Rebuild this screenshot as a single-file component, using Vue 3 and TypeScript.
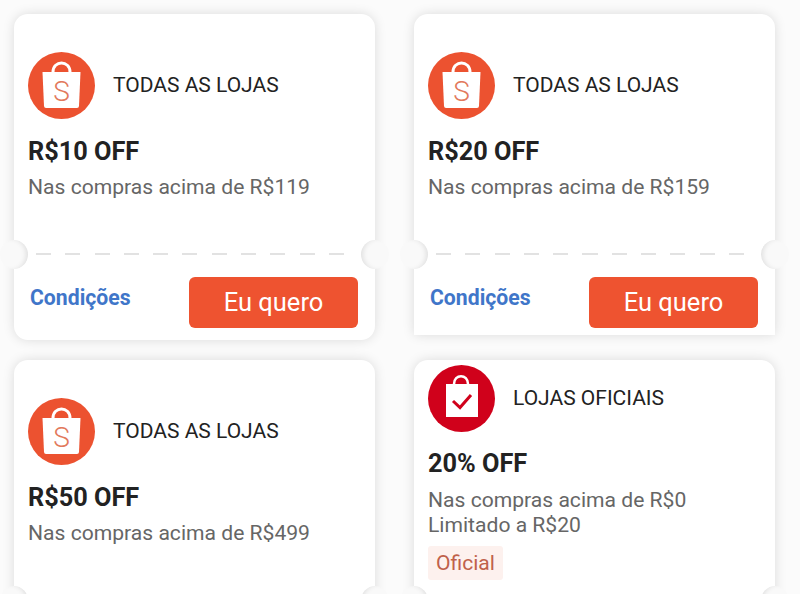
<script setup lang="ts">
type Coupon = {
  id: number
  kind: 'shopee' | 'official'
  store: string
  title: string
  lines: string[]
  badge?: string
  clipped?: boolean
  // the lower row runs off the bottom of the window before its footer starts
  footer: boolean
}

const coupons: Coupon[] = [
  { id: 1, kind: 'shopee', store: 'TODAS AS LOJAS', title: 'R$10 OFF', lines: ['Nas compras acima de R$119'], footer: true },
  { id: 2, kind: 'shopee', store: 'TODAS AS LOJAS', title: 'R$20 OFF', lines: ['Nas compras acima de R$159'], clipped: true, footer: true },
  { id: 3, kind: 'shopee', store: 'TODAS AS LOJAS', title: 'R$50 OFF', lines: ['Nas compras acima de R$499'], footer: false },
  { id: 4, kind: 'official', store: 'LOJAS OFICIAIS', title: '20% OFF', lines: ['Nas compras acima de R$0', 'Limitado a R$20'], badge: 'Oficial', footer: false },
]
</script>

<template>
  <div class="page">
    <div class="grid">
      <article
        v-for="c in coupons"
        :key="c.id"
        class="card"
        :class="{ official: c.kind === 'official', clipped: c.clipped }"
      >
        <div class="body">
          <div class="store">
            <svg v-if="c.kind === 'shopee'" class="logo" viewBox="0 0 67 67">
              <circle cx="33.5" cy="33.5" r="33.5" fill="#ec5230" />
              <path d="M25 20c0-12 17-12 17 0" fill="none" stroke="#fff" stroke-width="3" />
              <path d="M14.500 20h38l-1.500 34q-.1 2-2 2h-31q-1.900 0-2-2z" fill="#fff" />
              <text x="33.500" y="49" text-anchor="middle" class="logo-s">S</text>
            </svg>
            <svg v-else class="logo" viewBox="0 0 67 67">
              <circle cx="33.500" cy="33.500" r="33.500" fill="#d0011b" />
              <path d="M26 19c0-10.500 14-10.500 14 0" fill="none" stroke="#fff" stroke-width="2.500" />
              <path d="M18 19h32v33H18z" fill="#fff" />
              <path d="M25 36l7 6.500L43 30" fill="none" stroke="#d0011b" stroke-width="3" />
            </svg>
            <span class="store-name">{{ c.store }}</span>
          </div>
          <h2 class="title">{{ c.title }}</h2>
          <p v-for="line in c.lines" :key="line" class="desc">{{ line }}</p>
          <span v-if="c.badge" class="badge">{{ c.badge }}</span>
        </div>

        <div class="divider" />
        <i class="notch left" />
        <i class="notch right" />

        <div v-if="c.footer" class="foot">
          <a class="terms">Condições</a>
          <button type="button" class="cta">Eu quero</button>
        </div>
      </article>
    </div>
  </div>
</template>

<style>
html,
body {
  background: #fbfbfb;
}
</style>

<style scoped>
.page {
  width: 800px;
  height: 594px;
  overflow: hidden;
  background: #fbfbfb;
  font-family: Roboto, 'Liberation Sans', sans-serif;
}

.grid {
  display: grid;
  grid-template-columns: 361px 361px;
  grid-auto-rows: 326px;
  column-gap: 39px;
  row-gap: 20px;
  padding: 14px 0 0 14px;
}

.card {
  position: relative;
  display: flex;
  flex-direction: column;
  background: #fff;
  border-radius: 14px;
  box-shadow: 0 0 12px rgba(0, 0, 0, 0.13);
}

.card.clipped {
  height: 321px;
  border-radius: 14px 14px 0 0;
}

.body {
  flex: none;
  height: 240px;
  padding: 38px 14px 0;
  box-sizing: border-box;
}

.official .body {
  padding-top: 5px;
}

.store {
  display: flex;
  align-items: center;
  gap: 18px;
}

.logo {
  flex: none;
  width: 67px;
  height: 67px;
}

.logo-s {
  font-family: Roboto, sans-serif;
  font-size: 28px;
  font-weight: 300;
  fill: #e2795c;
}

.store-name {
  margin-top: -2px;
  font-size: 21px;
  color: #222;
}

.title {
  margin: 16px 0 0;
  font-size: 25.300px;
  line-height: 33px;
  font-weight: 700;
  color: #222;
}

.official .title {
  margin-top: 15px;
}

.desc {
  margin: 0;
  font-size: 21.100px;
  line-height: 25px;
  color: #666;
}

.title + .desc {
  margin-top: 5.500px;
}

.official .title + .desc {
  margin-top: 7px;
}

.badge {
  display: inline-block;
  margin-top: 9px;
  padding: 0 8px;
  font-size: 21.100px;
  line-height: 34px;
  color: #c0614a;
  background: #fdf1ee;
  border-radius: 3px;
}

.divider {
  position: absolute;
  top: 239px;
  left: 22px;
  width: 312px;
  height: 2px;
  background: repeating-linear-gradient(90deg, #e2e2e2 0 15px, transparent 15px 29.300px);
}

.notch {
  position: absolute;
  top: 226px;
  width: 28px;
  height: 29px;
  border-radius: 50%;
  background: #f9f9f9;
}

.notch.left {
  left: -14px;
  box-shadow: inset -4px 0 5px -2px rgba(0, 0, 0, 0.1);
}

.notch.right {
  right: -14px;
  box-shadow: inset 4px 0 5px -2px rgba(0, 0, 0, 0.1);
}

.foot {
  display: flex;
  align-items: center;
  justify-content: space-between;
  padding: 23px 17px 0 16px;
}

.terms {
  margin-top: -11px;
  font-size: 21.200px;
  font-weight: 700;
  color: #3f76c9;
}

.cta {
  width: 169px;
  height: 51px;
  padding: 0 0 2px;
  border: 0;
  border-radius: 6px;
  background: #ee5330;
  color: #fff;
  font-family: inherit;
  font-size: 25.500px;
}
</style>
